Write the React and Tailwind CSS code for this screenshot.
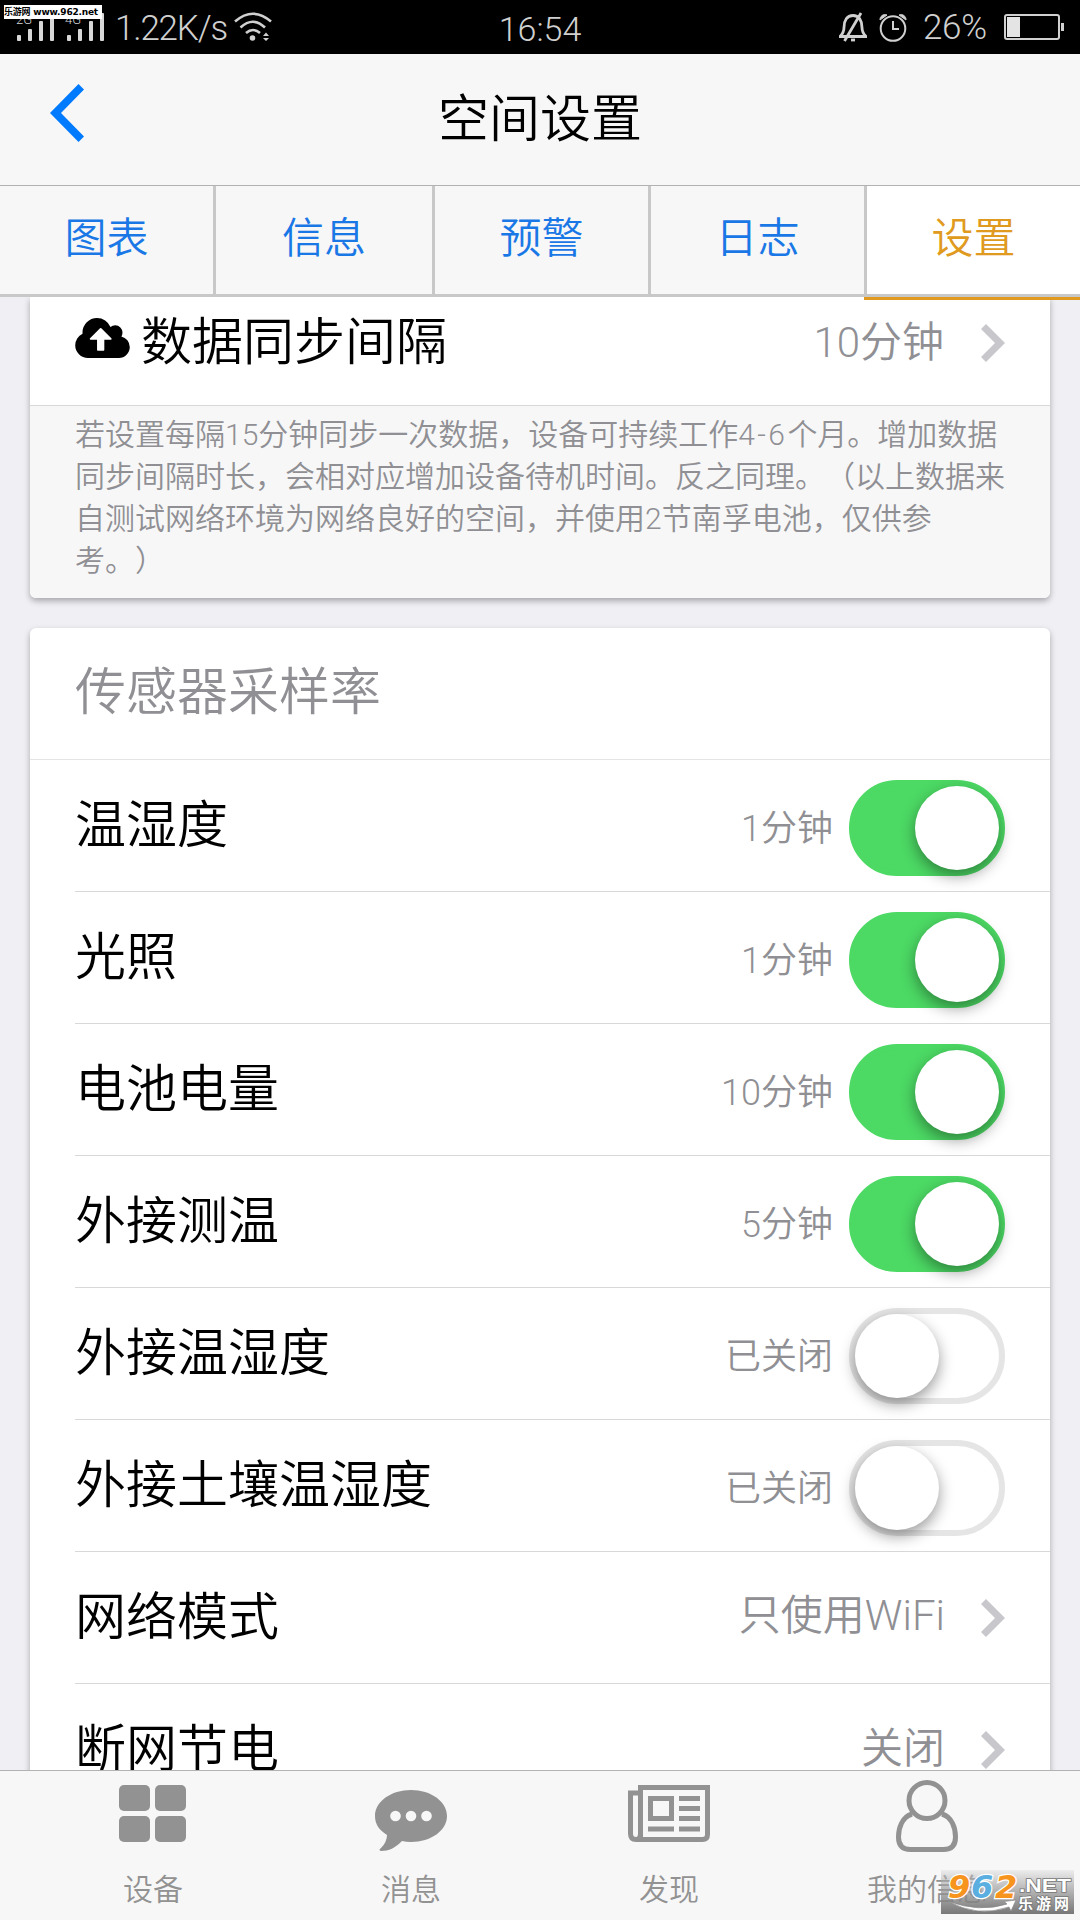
import React, { useState } from "react";

const tabs = [
  { name: "图表", style: "w-[216px] border-r-[3px]" },
  { name: "信息", style: "w-[219px] border-r-[3px]" },
  { name: "预警", style: "w-[216px] border-r-[3px]" },
  { name: "日志", style: "w-[216px] border-r-[3px]" },
];

const sensorsData = [
  { name: "温湿度", value: "1分钟", on: true },
  { name: "光照", value: "1分钟", on: true },
  { name: "电池电量", value: "10分钟", on: true },
  { name: "外接测温", value: "5分钟", on: true },
  { name: "外接温湿度", value: "已关闭", on: false },
  { name: "外接土壤温湿度", value: "已关闭", on: false },
];

const Chevron = () => (
  <svg className="w-6 h-[38px] shrink-0" viewBox="0 0 24 38">
    <path d="M5 0 24 19 5 38 0 33 14 19 0 5Z" fill="#c7c7cc" />
  </svg>
);

const Toggle = ({ on, onClick }) => (
  <button
    onClick={onClick}
    className={
      on
        ? "w-[156px] h-24 mt-[5px] shrink-0 rounded-full border-[6px] border-[#4cd964] bg-[#4cd964] flex justify-end"
        : "w-[156px] h-24 mt-[5px] shrink-0 rounded-full border-[6px] border-[#e5e5e5] bg-white flex justify-start"
    }
  >
    <span className="w-[84px] h-[84px] rounded-full bg-white shadow-[0_6px_15px_rgba(0,0,0,0.4)]" />
  </button>
);

const StatusBar = () => (
  <div className="relative h-[54px] shrink-0 bg-black text-[#d0d0d0] flex items-center">
    <svg className="absolute left-0 top-0 w-[110px] h-[54px]" viewBox="0 0 110 54" fill="#d8d8d8">
      <text x="16" y="24" fontSize="13" fontFamily="Roboto, sans-serif">2G</text>
      <text x="65" y="24" fontSize="13" fontFamily="Roboto, sans-serif">4G</text>
      <rect x="17" y="35" width="4" height="6" rx="1" />
      <rect x="28" y="29" width="4" height="12" rx="1" />
      <rect x="39" y="21" width="4" height="20" rx="1" />
      <rect x="50" y="13" width="4" height="28" rx="1" />
      <rect x="67" y="35" width="4" height="6" rx="1" />
      <rect x="78" y="29" width="4" height="12" rx="1" />
      <rect x="89" y="21" width="4" height="20" rx="1" />
      <rect x="100" y="13" width="4" height="28" rx="1" />
    </svg>
    <div className="absolute left-1 top-[5px] w-[98px] h-[14px] bg-white text-black text-[9px] font-bold leading-[14px] whitespace-nowrap font-['DejaVu_Sans','Noto_Sans_CJK_SC',sans-serif] tracking-[-0.200px]">
      乐游网 www.962.net
    </div>

    <div className="w-[360px] pl-[115px] flex items-center">
      <span className="text-[35px] leading-[54px] pt-[3px] tracking-[-1.200px]">1.22K/s</span>
      <svg className="w-[38px] h-[30px] ml-[7px]" viewBox="0 0 38 30" fill="none" stroke="#d0d0d0" strokeWidth="2.6">
        <path d="M1 9.500Q19-6 37 9.500M6.500 15.500Q19 4 31 15.500M12 21Q19 15 26 21" />
        <circle cx="18.500" cy="26" r="2.800" fill="#d0d0d0" stroke="none" />
        <path d="m29 24 3-3.500 3 3.500zM29 26l3 3 3-3z" fill="#d0d0d0" stroke="none" />
      </svg>
    </div>

    <span className="w-[360px] text-center text-[34px] leading-[54px] pt-[3px]">16:54</span>

    <div className="w-[360px] flex items-center justify-end pr-4">
      <svg className="w-7 h-[30px] mr-3" viewBox="0 0 28 30" fill="none" stroke="#d0d0d0" strokeWidth="2.8">
        <path d="M1 24.500h26c-3-3-4-5-4-9 0-7-3-12-9-12s-9 5-9 12c0 4-1 6-4 9ZM5.500 29 22 1" />
        <path d="M12 28h4" />
      </svg>
      <svg className="w-7 h-[29px] mr-[16px]" viewBox="0 0 28 29" fill="none" stroke="#d0d0d0" strokeWidth="2">
        <circle cx="14" cy="15.500" r="12.300" />
        <path d="M14 8v8h6" />
        <path d="M1 7a5 5 0 0 1 7-5zM27 7a5 5 0 0 0-7-5z" fill="#d0d0d0" strokeWidth="1" />
      </svg>
      <span className="text-[35px] leading-[54px] pt-px tracking-[-0.200px]">26%</span>
      <svg className="w-[60px] h-[26px] ml-[17px]" viewBox="0 0 60 26">
        <rect x="1" y="1" width="54" height="24" rx="2" fill="none" stroke="#d0d0d0" strokeWidth="2" />
        <rect x="3" y="3" width="13" height="20" fill="#e4e4e4" />
        <rect x="57" y="9" width="3" height="8" fill="#d0d0d0" />
      </svg>
    </div>
  </div>
);

const TabBar = () => (
  <div className="relative h-[150px] shrink-0 border-t border-[#b2b2b2] bg-[#f7f7f7] px-6 grid grid-cols-4 text-[#929292] text-[30px] leading-10">
    <div className="flex flex-col items-center">
      <svg className="w-[68px] h-[57px] mt-[14px] mb-7" viewBox="0 0 68 57" fill="#929292">
        <rect x="0" y="0" width="31" height="26" rx="5" />
        <rect x="36" y="0" width="31" height="26" rx="5" />
        <rect x="0" y="31" width="31" height="26" rx="5" />
        <rect x="36" y="31" width="31" height="26" rx="5" />
      </svg>
      设备
    </div>
    <div className="flex flex-col items-center">
      <svg className="w-[72px] h-[61px] mt-[19px] mb-[19px]" viewBox="0 0 72 61">
        <path
          d="M36 0C56 0 72 11.500 72 26S56 52 36 52q-5 0-9-1C20 58 14 61 6 61q-3-1 0-3 6-6 6-13C4 40 0 34 0 26 0 11.500 16 0 36 0Z"
          fill="#929292"
        />
        <g fill="#f7f7f7">
          <circle cx="20.500" cy="26" r="5.300" />
          <circle cx="36" cy="26" r="5.300" />
          <circle cx="51.500" cy="26" r="5.300" />
        </g>
      </svg>
      消息
    </div>
    <div className="flex flex-col items-center">
      <svg className="w-[82px] h-[57px] mt-[14px] mb-7" viewBox="0 0 82 57" fill="none" stroke="#929292" strokeWidth="5">
        <path d="M12.500 54.500V2.500h67v47q0 5-5 5H8q-5.500 0-5.500-6V8H12.500" />
        <path d="M8 54.500q4.500 0 4.500-6" />
        <rect x="22.500" y="13.500" width="21" height="20" />
        <path d="M51 13.500h21M51 23.500h21M51 33.500h21M51 44h21M20 44h26" />
      </svg>
      发现
    </div>
    <div className="flex flex-col items-center">
      <svg className="w-[62px] h-[72px] mt-[9px] mb-[18px]" viewBox="0 0 62 72" fill="none" stroke="#929292" strokeWidth="5">
        <circle cx="31" cy="20.500" r="18" />
        <path d="M16 34C6 37 2.500 48 2.500 57q0 12.500 12 12.500h33q12 0 12-12.500c0-9-3.500-20-13.500-23" />
      </svg>
      我的信息
    </div>

    {/* site badge */}
    <div className="absolute left-[941px] top-[99px] w-[133px] h-11 bg-gradient-to-b from-[#dddddd]/40 to-[#777777]">
      <svg className="w-full h-full" viewBox="0 0 133 44">
        <path d="M7 31Q38 43 66 34L63 31.500 75 30 70 41 68 37Q36 48 7 31Z" fill="#fff" stroke="#888" strokeWidth="0.700" />
        <g
          fontFamily="DejaVu Sans, sans-serif"
          fontSize="32"
          fontWeight="700"
          fontStyle="italic"
          stroke="#fff"
          strokeWidth="2.500"
          paintOrder="stroke"
        >
          <text x="7" y="28" fill="#f7941d">9</text>
          <text x="30" y="28" fill="#5aaee0">6</text>
          <text x="54" y="28" fill="#f7941d">2</text>
        </g>
        <text x="78" y="22" fontFamily="Liberation Sans, sans-serif" fontSize="19" fontWeight="700" textLength="52" lengthAdjust="spacingAndGlyphs" fill="#fff" stroke="#777" strokeWidth="1.500" paintOrder="stroke">.NET</text>
        <text x="77" y="39" fontFamily="Noto Sans CJK SC, sans-serif" fontSize="15" fontWeight="700" textLength="51" fill="#fff" stroke="#777" strokeWidth="1.500" paintOrder="stroke">乐游网</text>
      </svg>
    </div>
  </div>
);

const App = () => {
  const [sensors, setSensors] = useState(sensorsData);

  const toggleSensor = (index) => {
    setSensors(sensors.map((s, i) => (i === index ? { ...s, on: !s.on } : s)));
  };

  return (
    <div
      lang="zh-CN"
      className="w-[1080px] h-[1920px] overflow-hidden flex flex-col bg-[#efeff4] text-black font-[350] font-[Roboto,'Noto_Sans_CJK_SC',sans-serif]"
    >
      <StatusBar />

      {/* Header */}
      <div className="h-[132px] shrink-0 bg-[#f7f7f7] border-b border-[#b2b2b2] flex items-center">
        <svg className="w-[34px] h-[58px] ml-[50px] mt-[-13px]" viewBox="0 0 34 58">
          <path d="M28.500 0 34 5.500 11 29l23 23.500-5.500 5.500L0 29Z" fill="#007aff" />
        </svg>
        <h1 className="flex-1 text-center pr-[84px] text-[51px] leading-none">空间设置</h1>
      </div>

      {/* Tabs */}
      <div className="relative z-10 h-[111px] shrink-0 flex bg-[#f7f7f7] border-b-[3px] border-[#c8c8c8] text-[42px] leading-[106px] text-center text-[#1a78e6]">
        {tabs.map((tab) => (
          <div key={tab.name} className={`${tab.style} border-[#c8c8c8]`}>
            {tab.name}
          </div>
        ))}
        <div className="relative flex-1 bg-white text-[#e09a20]">
          设置
          <span className="absolute -left-[3px] right-0 top-[111px] h-[3px] bg-[#e09a20]" />
        </div>
      </div>

      <div className="flex-1 min-h-0 overflow-hidden px-[30px]">
        {/* Sync interval */}
        <div className="bg-white rounded-b-md shadow-[0_3px_6px_rgba(0,0,0,0.3)]">
          <div className="h-[109px] pl-[45px] pr-[45px] pb-[17px] flex items-center border-b border-[#d8d8d8]">
            <svg className="w-[55px] h-10 mt-[-10px] mr-[11px]" viewBox="0 0 1920 1408">
              <path d="M1280 736q0-14-9-23L919 361q-9-9-23-9t-23 9L522 712q-10 12-10 24 0 14 9 23t23 9h224v352q0 13 9.500 22.500t22.500 9.500h192q13 0 22.500-9.500t9.500-22.500V768h224q13 0 22.500-9.500T1280 736zM1920 1024q0 159-112.500 271.500T1536 1408H448q-185 0-316.500-131.500T0 960q0-130 70-240t188-165q-2-30-2-43 0-212 150-362T768 0q156 0 285.500 87T1242 318q71-62 166-62 106 0 181 75t75 181q0 76-41 138 130 31 213.500 135.500T1920 1024z" />
            </svg>
            <span className="text-[51px] leading-none">数据同步间隔</span>
            <span className="ml-auto mr-[37px] text-[42px] leading-none text-[#8f8f94]">10分钟</span>
            <Chevron />
          </div>
          <p className="h-[192px] pt-2 pl-[45px] bg-[#f7f7f7] rounded-b-md text-[30px] leading-[42px] text-[#8f8f94] whitespace-nowrap [text-spacing-trim:space-all]">
            若设置每隔15分钟同步一次数据，设备可持续工作<span className="tracking-[2.400px]">4-6</span>个月。增加数据
            <br />
            同步间隔时长，会相对应增加设备待机时间。反之同理。（以上数据来
            <br />
            自测试网络环境为网络良好的空间，并使用2节南孚电池，仅供参
            <br />
            考。）
          </p>
        </div>

        {/* Sampling rates */}
        <div className="mt-[30px] bg-white rounded-md shadow-[0_3px_6px_rgba(0,0,0,0.3)]">
          <div className="h-[132px] pl-[45px] pb-0.5 flex items-center border-b border-[#e4e4e4] text-[51px] leading-none text-[#8f8f94]">
            传感器采样率
          </div>
          {sensors.map((sensor, index) => (
            <div key={sensor.name} className="h-[132px] ml-[45px] pr-[45px] flex items-center border-b border-[#d8d8d8]">
              <span className="text-[51px] leading-none pb-px">{sensor.name}</span>
              <span className="ml-auto mr-4 pt-[7px] text-[36px] leading-none text-[#8f8f94]">{sensor.value}</span>
              <Toggle on={sensor.on} onClick={() => toggleSensor(index)} />
            </div>
          ))}
          <div className="h-[132px] ml-[45px] pr-[45px] flex items-center border-b border-[#d8d8d8]">
            <span className="text-[51px] leading-none pb-px">网络模式</span>
            <span className="ml-auto mr-9 pb-[3px] text-[42px] leading-none text-[#8f8f94]">只使用WiFi</span>
            <Chevron />
          </div>
          <div className="h-[132px] ml-[45px] pr-[45px] flex items-center">
            <span className="text-[51px] leading-none pb-px">断网节电</span>
            <span className="ml-auto mr-9 pb-[3px] text-[42px] leading-none text-[#8f8f94]">关闭</span>
            <Chevron />
          </div>
        </div>
      </div>

      <TabBar />
    </div>
  );
};

export default App;
